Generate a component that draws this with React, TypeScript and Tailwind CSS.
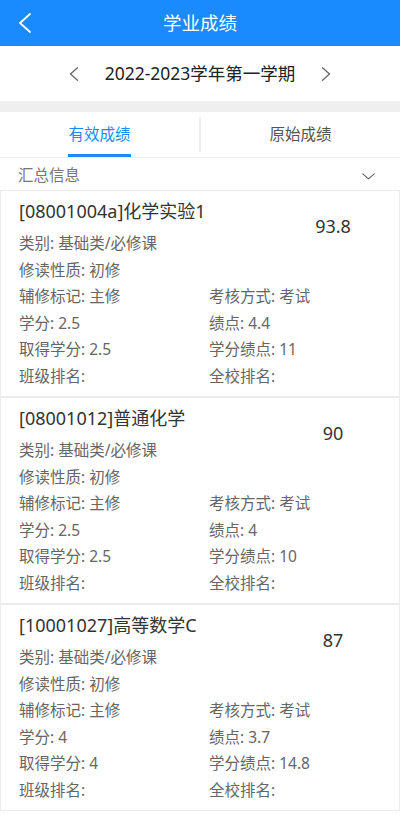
const courses = [
  {
    name: "[08001004a]化学实验1",
    score: "93.8",
    credit: "2.5",
    gpa: "4.4",
    earned: "2.5",
    creditGpa: "11",
  },
  {
    name: "[08001012]普通化学",
    score: "90",
    credit: "2.5",
    gpa: "4",
    earned: "2.5",
    creditGpa: "10",
  },
  {
    name: "[10001027]高等数学C",
    score: "87",
    credit: "4",
    gpa: "3.7",
    earned: "4",
    creditGpa: "14.8",
  },
];

const Chevron = ({ dir, className, w = "1.6" }: { dir: "left" | "right" | "down"; className: string; w?: string }) => {
  const d =
    dir === "left" ? "M15 3 L5 12 L15 21" : dir === "right" ? "M5 3 L15 12 L5 21" : "M2 4 L10 11 L18 4";
  const vb = dir === "down" ? "0 0 20 14" : "0 0 20 24";
  return (
    <svg viewBox={vb} className={className} fill="none" stroke="currentColor" strokeWidth={w} strokeLinecap="round" strokeLinejoin="round">
      <path d={d} />
    </svg>
  );
};

const CourseCard = ({ c }: { c: (typeof courses)[number] }) => {
  return (
    <div className="flex border border-[#ececec] bg-white pt-[7px] pb-[7px]">
      <div className="w-[312px] shrink-0 pl-[18px]">
        <div className="h-[26px] text-[18px] leading-[26px] text-[#333]">{c.name}</div>
        <div className="mt-[6px] grid grid-cols-[190px_1fr] text-[15.5px] leading-[26.5px] text-[#666]">
          <div className="col-span-2">类别: 基础类/必修课</div>
          <div className="col-span-2">修读性质: 初修</div>
          <div>辅修标记: 主修</div>
          <div>考核方式: 考试</div>
          <div>学分: {c.credit}</div>
          <div>绩点: {c.gpa}</div>
          <div>取得学分: {c.earned}</div>
          <div>学分绩点: {c.creditGpa}</div>
          <div>班级排名:</div>
          <div>全校排名:</div>
        </div>
      </div>
      <div className="w-[40px] pt-[16px] text-center">
        <span className="whitespace-nowrap text-[18px] leading-[24px] text-[#333]">{c.score}</span>
      </div>
    </div>
  );
};

export default function App() {
  return (
    <div
      className="min-h-[818px] w-[400px] bg-white"
      style={{ fontFamily: '"Noto Sans", "Noto Sans CJK SC", sans-serif' }}
    >
      {/* Header */}
      <div className="grid h-[46px] grid-cols-[48px_1fr_48px] items-center bg-[#1a8aff] text-white">
        <div className="flex items-center pl-[15px]">
          <Chevron dir="left" className="h-[26px] w-[20px]" w="1.8" />
        </div>
        <div className="text-center text-[18.5px]">学业成绩</div>
        <div />
      </div>

      {/* Semester switcher */}
      <div className="flex h-[55px] items-center justify-center gap-[24px]">
        <Chevron dir="left" className="h-[22px] w-[14px] text-[#666]" w="1.8" />
        <span className="text-[17.5px] text-[#222]">2022-2023学年第一学期</span>
        <Chevron dir="right" className="h-[22px] w-[14px] text-[#666]" w="1.8" />
      </div>

      <div className="h-[11px] bg-[#efefef]" />

      {/* Tabs */}
      <div className="flex h-[46px] border-b border-[#f0f0f0]">
        <div className="flex flex-1 flex-col items-center justify-center">
          <div className="relative flex h-full flex-col items-center justify-center">
            <span className="text-[15.5px] text-[#1a8aff]">有效成绩</span>
            <div className="absolute bottom-0 left-0 right-0 h-[3px] bg-[#1a8aff]" />
          </div>
        </div>
        <div className="my-[5px] w-[2px] bg-[#eeeeee]" />
        <div className="flex flex-1 items-center justify-center text-[15.5px] text-[#555]">原始成绩</div>
      </div>

      {/* Summary */}
      <div className="flex h-[32px] items-center justify-between pl-[18px] pr-[24px] pt-[3px]">
        <span className="text-[15.5px] text-[#777]">汇总信息</span>
        <Chevron dir="down" className="h-[10px] w-[15px] text-[#666]" />
      </div>

      {courses.map((c) => (
        <CourseCard key={c.name} c={c} />
      ))}
    </div>
  );
}
